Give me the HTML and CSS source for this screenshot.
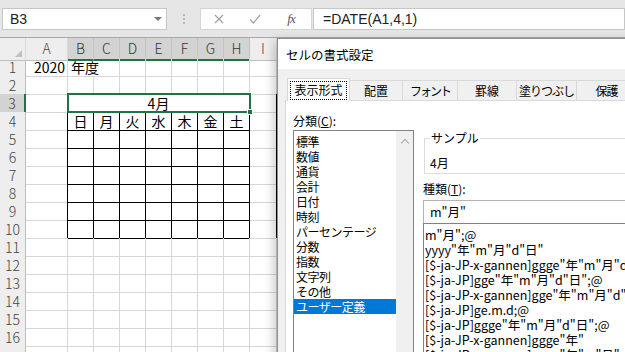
FILE: index.html
```html
<!DOCTYPE html>
<html lang="ja">
<head>
<meta charset="utf-8">
<link rel="stylesheet" href="styles.css">
</head>
<body>
<div class="toolbar">
  <div class="namebox"><span>B3</span><span class="dd"></span></div>
  <div class="sep"><i></i><i></i><i></i></div>
  <div class="fbtns">
    <span class="fb"><svg width="10" height="10" viewBox="0 0 10 10"><path d="M1 1L9 9M9 1L1 9" stroke="#a0a0a0" stroke-width="1.2" fill="none"/></svg></span>
    <span class="fb"><svg width="12" height="10" viewBox="0 0 12 10"><path d="M1 5.5L4.5 9L11 1" stroke="#a0a0a0" stroke-width="1.2" fill="none"/></svg></span>
    <span class="fb fx">fx</span>
  </div>
  <div class="formula">=DATE(A1,4,1)</div>
</div>

<div class="sheet">
  <div class="r hdr">
    <div class="c ch corner"><span class="tri"></span></div>
    <div class="c ch">A</div>
    <div class="c ch on">B</div><div class="c ch on">C</div><div class="c ch on">D</div><div class="c ch on">E</div><div class="c ch on">F</div><div class="c ch on">G</div><div class="c ch on">H</div>
    <div class="c ch">I</div><div class="c ch"></div>
  </div>
  <div class="r">
    <div class="c rh">1</div><div class="c num">2020</div><div class="c span2 txt">年度</div><div class="c"></div><div class="c"></div><div class="c"></div><div class="c"></div><div class="c"></div><div class="c"></div><div class="c"></div>
  </div>
  <div class="r">
    <div class="c rh">2</div><div class="c"></div><div class="c"></div><div class="c"></div><div class="c"></div><div class="c"></div><div class="c"></div><div class="c"></div><div class="c"></div><div class="c"></div><div class="c"></div>
  </div>
  <div class="r">
    <div class="c rh on">3</div><div class="c"></div><div class="c merged">4月</div><div class="c kr"></div><div class="c"></div>
  </div>
  <div class="r">
    <div class="c rh">4</div><div class="c kr"></div><div class="c k">日</div><div class="c k">月</div><div class="c k">火</div><div class="c k">水</div><div class="c k">木</div><div class="c k">金</div><div class="c k">土</div><div class="c kr"></div><div class="c"></div>
  </div>
  <div class="r">
    <div class="c rh">5</div><div class="c kr"></div><div class="c k"></div><div class="c k"></div><div class="c k"></div><div class="c k"></div><div class="c k"></div><div class="c k"></div><div class="c k"></div><div class="c kr"></div><div class="c"></div>
  </div>
  <div class="r">
    <div class="c rh">6</div><div class="c kr"></div><div class="c k"></div><div class="c k"></div><div class="c k"></div><div class="c k"></div><div class="c k"></div><div class="c k"></div><div class="c k"></div><div class="c kr"></div><div class="c"></div>
  </div>
  <div class="r">
    <div class="c rh">7</div><div class="c kr"></div><div class="c k"></div><div class="c k"></div><div class="c k"></div><div class="c k"></div><div class="c k"></div><div class="c k"></div><div class="c k"></div><div class="c kr"></div><div class="c"></div>
  </div>
  <div class="r">
    <div class="c rh">8</div><div class="c kr"></div><div class="c k"></div><div class="c k"></div><div class="c k"></div><div class="c k"></div><div class="c k"></div><div class="c k"></div><div class="c k"></div><div class="c kr"></div><div class="c"></div>
  </div>
  <div class="r">
    <div class="c rh">9</div><div class="c kr"></div><div class="c k"></div><div class="c k"></div><div class="c k"></div><div class="c k"></div><div class="c k"></div><div class="c k"></div><div class="c k"></div><div class="c kr"></div><div class="c"></div>
  </div>
  <div class="r">
    <div class="c rh">10</div><div class="c kr"></div><div class="c k"></div><div class="c k"></div><div class="c k"></div><div class="c k"></div><div class="c k"></div><div class="c k"></div><div class="c k"></div><div class="c kr"></div><div class="c"></div>
  </div>
  <div class="r">
    <div class="c rh">11</div><div class="c"></div><div class="c"></div><div class="c"></div><div class="c"></div><div class="c"></div><div class="c"></div><div class="c"></div><div class="c"></div><div class="c"></div><div class="c"></div>
  </div>
  <div class="r">
    <div class="c rh">12</div><div class="c"></div><div class="c"></div><div class="c"></div><div class="c"></div><div class="c"></div><div class="c"></div><div class="c"></div><div class="c"></div><div class="c"></div><div class="c"></div>
  </div>
  <div class="r">
    <div class="c rh">13</div><div class="c"></div><div class="c"></div><div class="c"></div><div class="c"></div><div class="c"></div><div class="c"></div><div class="c"></div><div class="c"></div><div class="c"></div><div class="c"></div>
  </div>
  <div class="r">
    <div class="c rh">14</div><div class="c"></div><div class="c"></div><div class="c"></div><div class="c"></div><div class="c"></div><div class="c"></div><div class="c"></div><div class="c"></div><div class="c"></div><div class="c"></div>
  </div>
  <div class="r">
    <div class="c rh">15</div><div class="c"></div><div class="c"></div><div class="c"></div><div class="c"></div><div class="c"></div><div class="c"></div><div class="c"></div><div class="c"></div><div class="c"></div><div class="c"></div>
  </div>
  <div class="r">
    <div class="c rh">16</div><div class="c"></div><div class="c"></div><div class="c"></div><div class="c"></div><div class="c"></div><div class="c"></div><div class="c"></div><div class="c"></div><div class="c"></div><div class="c"></div>
  </div>
  <div class="r">
    <div class="c rh"></div><div class="c"></div><div class="c"></div><div class="c"></div><div class="c"></div><div class="c"></div><div class="c"></div><div class="c"></div><div class="c"></div><div class="c"></div><div class="c"></div>
  </div>
  <div class="sel"><span class="handle"></span></div>
</div>

<div class="dialog">
  <div class="dtitle">セルの書式設定</div>
  <div class="tabs">
    <div class="tab active w63"><span class="focus">表示形式</span></div>
    <div class="tab w53">配置</div>
    <div class="tab w55">フォント</div>
    <div class="tab w59">罫線</div>
    <div class="tab w60">塗りつぶし</div>
    <div class="tab w60">保護</div>
  </div>
  <div class="panel">
    <div class="leftcol">
      <div class="lbl">分類(<u>C</u>):</div>
      <div class="listbox">
        <ul class="items">
          <li>標準</li>
          <li>数値</li>
          <li>通貨</li>
          <li>会計</li>
          <li>日付</li>
          <li>時刻</li>
          <li>パーセンテージ</li>
          <li>分数</li>
          <li>指数</li>
          <li>文字列</li>
          <li>その他</li>
          <li class="picked">ユーザー定義</li>
        </ul>
        <div class="vscroll"><span class="up"></span></div>
      </div>
    </div>
    <div class="rightcol">
      <div class="group"><span class="legend">サンプル</span><div class="sample">4月</div></div>
      <div class="lbl kind">種類(<u>T</u>):</div>
      <div class="input">m"月"</div>
      <ul class="fmts">
        <li>m"月";@</li>
        <li>yyyy"年"m"月"d"日"</li>
        <li>[$-ja-JP-x-gannen]ggge"年"m"月"d"日";@</li>
        <li>[$-ja-JP]gge"年"m"月"d"日";@</li>
        <li>[$-ja-JP-x-gannen]gge"年"m"月"d"日";@</li>
        <li>[$-ja-JP]ge.m.d;@</li>
        <li>[$-ja-JP]ggge"年"m"月"d"日";@</li>
        <li>[$-ja-JP-x-gannen]ggge"年"</li>
        <li>[$-ja-JP-x-gannen]ggge"年"m"月"</li>
      </ul>
    </div>
  </div>
</div>
</body>
</html>
```
FILE: styles.css
```css
* { box-sizing: border-box; margin: 0; padding: 0; }
body {
  width: 625px;
  height: 352px;
  overflow: hidden;
  position: relative;
  background: #fff;
  font-family: "Noto Sans CJK JP", "Noto Sans", sans-serif;
  color: #000;
}

/* toolbar */
.toolbar {
  height: 38px;
  background: #e6e6e6;
  border-bottom: 1px solid #a8a8a8;
  display: flex;
  align-items: flex-start;
  padding: 8px 0 0 2px;
}
.namebox {
  width: 165px;
  height: 22px;
  background: #fff;
  border: 1px solid #c6c6c6;
  display: flex;
  align-items: center;
  justify-content: space-between;
  padding: 0 4px 0 7px;
  font-size: 14px;
  color: #222;
  font-family: "Liberation Sans", sans-serif;
}
.dd {
  width: 0; height: 0;
  border-left: 4px solid transparent;
  border-right: 4px solid transparent;
  border-top: 4px solid #777;
}
.sep {
  width: 33px;
  height: 22px;
  display: flex;
  flex-direction: column;
  align-items: center;
  justify-content: center;
  gap: 2px;
}
.sep i { width: 2px; height: 2px; background: #b8b8b8; display: block; }
.fbtns {
  width: 112px;
  height: 22px;
  background: #fff;
  border: 1px solid #d4d4d4;
  display: flex;
  align-items: center;
}
.fb { width: 36px; display: flex; justify-content: center; align-items: center; }
.fx {
  font-family: "Liberation Serif", serif;
  font-style: italic;
  font-size: 13px;
  color: #555;
  letter-spacing: -1px;
}
.formula {
  flex: 1;
  height: 22px;
  margin-left: 1px;
  background: #fff;
  border: 1px solid #c6c6c6;
  padding-left: 9px;
  font-size: 14px;
  line-height: 20px;
  color: #222;
  font-family: "Liberation Sans", sans-serif;
}

/* sheet */
.sheet { position: relative; height: 314px; overflow: hidden; }
.r {
  display: grid;
  grid-template-columns: 26px 42px repeat(7, 26px) 27px 1fr;
  height: 18px;
}
.r.hdr { height: 20px; }
.c {
  border-right: 1px solid #d6d6d6;
  border-bottom: 1px solid #d6d6d6;
  font-size: 14px;
  line-height: 18px;
  white-space: nowrap;
  overflow: visible;
}
.ch {
  background: #eeeeee;
  border-bottom-color: #bdbdbd;
  border-right-color: #dadada;
  text-align: center;
  font-size: 14px;
  line-height: 21px;
  color: #444;
  font-weight: 300;
}
.ch.on {
  background: #d3d3d3;
  border-bottom: 2px solid #217346;
  border-right-color: #c4c4c4;
  color: #333;
}
.corner { position: relative; }
.tri {
  position: absolute;
  right: 3px; bottom: 3px;
  width: 0; height: 0;
  border-left: 7px solid transparent;
  border-bottom: 7px solid #c0c0c0;
}
.rh {
  background: #eeeeee;
  border-right-color: #bdbdbd;
  border-bottom-color: #d6d6d6;
  text-align: center;
  font-size: 14px;
  color: #444;
  font-weight: 300;
}
.rh.on { background: #d3d3d3; border-right: 2px solid #217346; }
.num { text-align: right; padding-right: 2px; }
.txt { padding-left: 3px; }
.span2 { grid-column: span 2; }
.merged {
  grid-column: span 7;
  text-align: center;
  border-right-color: #000;
  border-bottom-color: #000;
}
.k { border-right-color: #000; border-bottom-color: #000; text-align: center; }
.kr { border-right-color: #000; }
.sel {
  position: absolute;
  left: 67px;
  top: 55px;
  width: 184px;
  height: 20px;
  border: 2px solid #217346;
}
.handle {
  position: absolute;
  right: -4px;
  bottom: -4px;
  width: 6px;
  height: 6px;
  background: #217346;
  border: 1px solid #fff;
}

/* dialog */
.dialog {
  position: absolute;
  left: 277px;
  top: 38px;
  width: 370px;
  height: 330px;
  background: #f0f0f0;
  border: 1px solid #8f8f8f;
  box-shadow: -3px 3px 10px rgba(0, 0, 0, 0.22);
  font-size: 12px;
}
.dtitle {
  height: 30px;
  background: #fff;
  padding-left: 8px;
  font-size: 12.5px;
  line-height: 31px;
}
.tabs {
  height: 31px;
  display: flex;
  align-items: flex-end;
  padding-left: 9px;
}
.tab {
  height: 20px;
  background: #f0f0f0;
  border: 1px solid #d9d9d9;
  border-bottom: none;
  border-left: none;
  text-align: center;
  line-height: 19px;
  font-size: 12px;
}
.tab.active {
  height: 23px;
  margin-bottom: -1px;
  background: #fff;
  border-left: 1px solid #d9d9d9;
  position: relative;
  z-index: 1;
  padding: 3px 3px 0;
}
.focus {
  display: block;
  outline: 1px dotted #000;
  line-height: 16px;
  height: 17px;
}
.w63 { width: 63px; }
.w53 { width: 53px; }
.w55 { width: 55px; letter-spacing: -2px; }
.w59 { width: 59px; }
.w60 { width: 60px; letter-spacing: -1px; }
.panel {
  margin-left: 7px;
  height: 260px;
  background: #fff;
  border: 1px solid #d9d9d9;
  display: flex;
  padding: 12px 0 0 7px;
}
.lbl { line-height: 15px; height: 15px; }
.leftcol { width: 121px; }
.listbox {
  margin-top: 2px;
  width: 121px;
  height: 240px;
  border: 1px solid #828282;
  display: flex;
}
.items { list-style: none; flex: 1; padding-top: 3px; }
.items li {
  height: 15px;
  line-height: 15px;
  padding-left: 2px;
  letter-spacing: -0.5px;
  white-space: nowrap;
}
.items li.picked { background: #0078d7; color: #fff; }
.vscroll {
  width: 17px;
  background: #f0f0f0;
  display: flex;
  justify-content: center;
  padding-top: 9px;
}
.up {
  width: 6px;
  height: 6px;
  border-left: 1px solid #a8a8a8;
  border-top: 1px solid #a8a8a8;
  transform: rotate(45deg);
}
.rightcol { margin-left: 9px; flex: 1; }
.group {
  position: relative;
  margin-top: 25px;
  margin-left: 1px;
  height: 36px;
  border: 1px solid #dcdcdc;
  padding: 16px 0 0 5px;
}
.legend {
  position: absolute;
  left: 5px;
  top: -9px;
  background: #fff;
  padding: 0 1px;
  line-height: 15px;
}
.sample { line-height: 15px; }
.kind { margin-top: 7px; }
.input {
  margin-top: 4px;
  height: 23px;
  border: 1px solid #b4b4b4;
  border-bottom: none;
  padding-left: 6px;
  line-height: 22px;
  font-size: 12.5px;
}
.fmts {
  list-style: none;
  border: 1px solid #828282;
  height: 160px;
  padding: 3px 0 0 1px;
  font-size: 12.5px;
}
.fmts li { height: 15px; line-height: 15px; white-space: nowrap; }
```
